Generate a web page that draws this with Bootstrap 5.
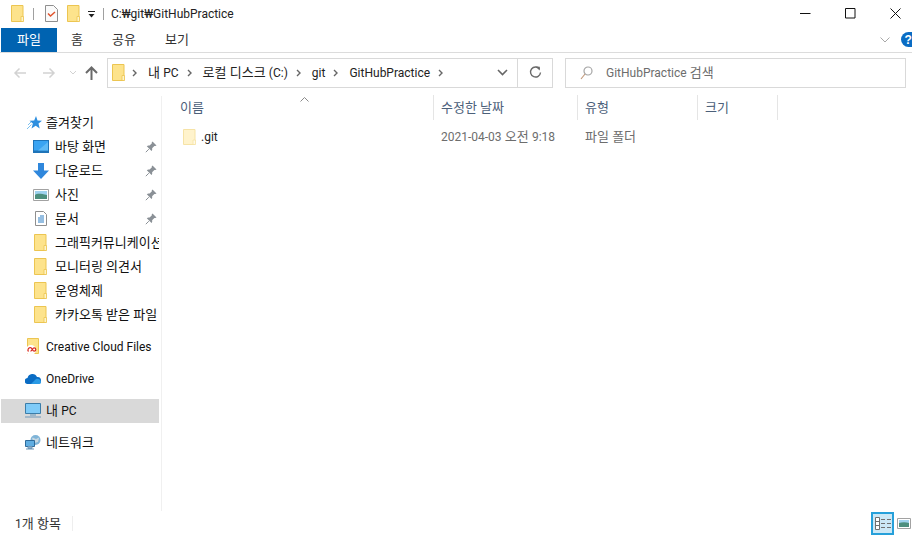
<!DOCTYPE html>
<html lang="ko">
<head>
<meta charset="utf-8">
<title>GitHubPractice</title>
<link href="https://cdn.jsdelivr.net/npm/bootstrap@5.3.0/dist/css/bootstrap.min.css" rel="stylesheet">
<style>
html,body{height:100%;}
body{width:912px;height:536px;overflow:hidden;background:#fff;font:13px/16px Roboto,"Noto Sans CJK KR",sans-serif;color:#1a1a1a;}
.lat{font-size:12px;}
svg{display:block;flex:none;}
.win{height:536px;}
.titlebar{height:28px;padding-left:11px;}
.tsep{width:1px;height:12px;background:#a0a0a0;}
.gap-a{margin-left:9px;}
.gap-b{margin-left:11px;}
.gap-c{margin-left:9px;}
.gap-d{margin-left:8px;}
.gap-e{margin-left:7px;}
.wintitle{margin-left:7px;color:#222;}
.winbtns{margin-left:auto;padding-right:11px;gap:34px;}
.ribbon{height:25px;padding-left:1px;border-bottom:1px solid #dcdcdc;}
.rtab{height:24px;color:#333;}
.rtab-file{width:56px;background:#0063b1;color:#fff;}
.rtab-home{width:40px;}
.rtab-share{width:54px;}
.rtab-view{width:52px;}
.ribbon-end{margin-left:auto;gap:11px;}
.addrrow{height:43px;padding:5px 6px 8px 13px;}
.navicons{width:94px;}
.nav-fwd{margin-left:17px;}
.nav-drop{margin-left:13px;}
.nav-up{margin-left:8px;}
.addr{width:446px;height:30px;border:1px solid #d9d9d9;padding-left:4px;color:#222;}
.crumb{margin:0 7px 0 9px;}
.crumb-sep{margin-left:6px;}
.addr-end{margin-left:auto;}
.addr-drop{width:30px;}
.addr-ref{width:35px;height:28px;border-left:1px solid #d9d9d9;}
.search{margin-left:12px;width:341px;height:30px;border:1px solid #d9d9d9;padding-left:40px;color:#6d6d6d;position:relative;}
.searchicon{position:absolute;left:14px;top:7px;}
.content{height:417px;}
.side{width:162px;border-right:1px solid #f0f0f0;padding:15px 2px 0 1px;}
.srow{height:24px;white-space:nowrap;overflow:hidden;color:#111;}
.srow>*{flex:none;}
.srow-fav{padding-left:26px;gap:4px;}
.srow-item{padding-left:31px;gap:6px;}
.srow-top{padding-left:23px;gap:5px;}
.srow-active{background:#d9d9d9;}
.icn{width:17px;display:flex;justify-content:center;}
.pin{margin-left:auto;margin-right:2px;}
.mt-cc{margin-top:8px;}
.mt-od{margin-top:8px;}
.mt-pc{margin-top:8px;}
.mt-net{margin-top:8px;}
.main{flex:1;position:relative;}
.hdr{height:26px;color:#4c607a;margin-top:-1px;}
.hcol{height:25px;display:flex;align-items:center;padding-left:7px;border-right:1px solid #e5e5e5;}
.w-name{width:272px;padding-left:18px;}
.w-date{width:144px;}
.w-type{width:120px;}
.w-size{width:80px;}
.sortcaret{position:absolute;left:138px;top:1px;}
.frow{height:24px;margin-top:4px;color:#6d6d6d;}
.fcell{padding-left:7px;}
.fname{width:272px;padding-left:21px;gap:5px;color:#222;}
.fdate{width:144px;}
.ftype{width:120px;}
.statusbar{height:25px;padding-left:15px;color:#333;}
.stsep{width:1px;height:15px;background:#eee;margin-left:11px;}
.viewbtns{margin-left:auto;padding-right:1px;gap:3px;}
.viewon{width:23px;height:23px;background:#cce8f6;border:2px solid #26a0da;}
</style>
</head>
<body>
<svg width="0" height="0" style="position:absolute">
<defs>
<symbol id="folder" viewBox="0 0 13 17">
<path d="M.5.500h11.500v16H.5z" fill="#fde38c" stroke="#ecc551"/>
<path d="M10 11.500h2.500v5H10z" fill="#fff4c8" stroke="#ecc551" stroke-width=".8"/>
</symbol>
<symbol id="pinx" viewBox="0 0 12 12">
<path d="M7.500.500l4 4-1.200.6-.9-.2-2.300 2.300c.3 1.100.1 2-.6 2.700L1.800 5.200c.7-.7 1.700-.9 2.800-.6l2.300-2.300-.2-.9z" fill="#8a9096"/>
<path d="M3.800 8.200L.8 11.200" stroke="#8a9096"/>
</symbol>
</defs>
</svg>
<div class="win d-flex flex-column">

<div class="titlebar d-flex align-items-center">
  <svg width="13" height="17"><use href="#folder"/></svg>
  <span class="tsep gap-a"></span>
  <svg class="gap-b" width="13" height="17" viewBox="0 0 13 17"><path d="M.5.500h8l4 4v12H.5z" fill="#fafafa" stroke="#8f8f8f"/><path d="M3 8.500l2.500 2.500L10 7" fill="none" stroke="#e0532c" stroke-width="1.500"/></svg>
  <svg class="gap-c" width="13" height="17"><use href="#folder"/></svg>
  <svg class="gap-d" width="8" height="8" viewBox="0 0 8 8"><path d="M0 1h7v1H0z" fill="#222"/><path d="M.5 4h6L3.500 7.500z" fill="#222"/></svg>
  <span class="tsep gap-e"></span>
  <span class="wintitle lat">C:₩git₩GitHubPractice</span>
  <div class="winbtns d-flex">
    <svg width="11" height="11" viewBox="0 0 11 11"><path d="M0 5.500h10.500" stroke="#111"/></svg>
    <svg width="11" height="11" viewBox="0 0 11 11"><path d="M.5.500h9.500v9.500H.5z" fill="none" stroke="#111"/></svg>
    <svg width="11" height="11" viewBox="0 0 11 11"><path d="M.5.500l10 10M10.500.500l-10 10" stroke="#111"/></svg>
  </div>
</div>

<div class="ribbon d-flex align-items-center">
  <div class="rtab rtab-file d-flex align-items-center justify-content-center">파일</div>
  <div class="rtab rtab-home d-flex align-items-center justify-content-center">홈</div>
  <div class="rtab rtab-share d-flex align-items-center justify-content-center">공유</div>
  <div class="rtab rtab-view d-flex align-items-center justify-content-center">보기</div>
  <div class="ribbon-end d-flex align-items-center">
    <svg width="10" height="6" viewBox="0 0 10 6"><path d="M.5.500L5 5l4.500-4.500" fill="none" stroke="#a8a8a8"/></svg>
    <svg width="11" height="15" viewBox="0 0 11 15"><path d="M7.500 0a7.500 7.500 0 1 0 0 15H11V0z" fill="#0a6cc4"/><text x="3.500" y="12" fill="#fff" font-size="12" font-weight="700" font-family="Liberation Sans, sans-serif">?</text></svg>
  </div>
</div>

<div class="addrrow d-flex align-items-center">
  <div class="navicons d-flex align-items-center">
    <svg width="13" height="12" viewBox="0 0 13 12"><path d="M13 6H2M6.500 1.500L2 6l4.500 4.500" fill="none" stroke="#d2d2d2" stroke-width="1.500"/></svg>
    <svg class="nav-fwd" width="13" height="12" viewBox="0 0 13 12"><path d="M0 6h11M6.500 1.500L11 6l-4.500 4.500" fill="none" stroke="#d2d2d2" stroke-width="1.500"/></svg>
    <svg class="nav-drop" width="8" height="6" viewBox="0 0 8 6"><path d="M1 1l3 3 3-3" fill="none" stroke="#d2d2d2"/></svg>
    <svg class="nav-up" width="13" height="14" viewBox="0 0 13 14"><path d="M6.500 14V2M1 7l5.500-5.500L12 7" fill="none" stroke="#6a6a6a" stroke-width="2"/></svg>
  </div>
  <div class="addr d-flex align-items-center">
    <svg width="13" height="17"><use href="#folder"/></svg>
    <svg class="crumb-sep" width="8" height="8" viewBox="0 0 8 8"><path d="M2 1l3 3-3 3" fill="none" stroke="#666" stroke-width="1.400"/></svg>
    <span class="crumb">내 <span class="lat">PC</span></span>
    <svg width="8" height="8" viewBox="0 0 8 8"><path d="M2 1l3 3-3 3" fill="none" stroke="#666" stroke-width="1.400"/></svg>
    <span class="crumb">로컬 디스크 <span class="lat">(C:)</span></span>
    <svg width="8" height="8" viewBox="0 0 8 8"><path d="M2 1l3 3-3 3" fill="none" stroke="#666" stroke-width="1.400"/></svg>
    <span class="crumb lat">git</span>
    <svg width="8" height="8" viewBox="0 0 8 8"><path d="M2 1l3 3-3 3" fill="none" stroke="#666" stroke-width="1.400"/></svg>
    <span class="crumb lat">GitHubPractice</span>
    <svg width="8" height="8" viewBox="0 0 8 8"><path d="M2 1l3 3-3 3" fill="none" stroke="#666" stroke-width="1.400"/></svg>
    <div class="addr-end d-flex align-items-center">
      <div class="addr-drop d-flex justify-content-center"><svg width="11" height="7" viewBox="0 0 11 7"><path d="M1 1l4.500 4.500L10 1" fill="none" stroke="#666" stroke-width="1.600"/></svg></div>
      <div class="addr-ref d-flex align-items-center justify-content-center"><svg width="13" height="13" viewBox="0 0 13 13"><path d="M10.500 3A5 5 0 1 0 11.500 6.500" fill="none" stroke="#6a6a6a" stroke-width="1.400"/><path d="M6.500.500L10.800.800V4.500z" fill="#6a6a6a"/></svg></div>
    </div>
  </div>
  <div class="search d-flex align-items-center">
    <svg class="searchicon" width="13" height="14" viewBox="0 0 13 14"><circle cx="8" cy="5" r="4" fill="none" stroke="#a5a5a5" stroke-width="1.200"/><path d="M5 8l-4 5" stroke="#c29a7c" stroke-width="1.200"/></svg>
    <span><span class="lat">GitHubPractice</span> 검색</span>
  </div>
</div>

<div class="content d-flex">
  <nav class="side">
    <div class="srow srow-fav d-flex align-items-center">
      <svg width="15" height="14" viewBox="0 0 15 14"><path d="M9 0l1.500 4.500 4.500.2-3.500 2.900 1.200 4.900-4-2.700-4.200 2.700 1.400-4.900L2.500 4.800 7.200 4.500z" fill="#2e8fdf"/><path d="M0 13l4.500-4.500M1 9l3-3" stroke="#7cc0ef"/></svg>
      <span>즐겨찾기</span>
    </div>
    <div class="srow srow-item d-flex align-items-center">
      <span class="icn"><svg width="16" height="13" viewBox="0 0 16 13"><path d="M0 0h16v13H0z" fill="#1f74b8"/><path d="M1 1h14v9.500H1z" fill="#3aa4f2"/><path d="M5 10.500L15 2v8.500z" fill="#5fbaf6"/></svg></span>
      <span>바탕 화면</span>
      <svg class="pin" width="12" height="12"><use href="#pinx"/></svg>
    </div>
    <div class="srow srow-item d-flex align-items-center">
      <span class="icn"><svg width="16" height="16" viewBox="0 0 16 16"><path d="M5 0h6v7.500h5L8 16 0 7.500h5z" fill="#2f87dc"/></svg></span>
      <span>다운로드</span>
      <svg class="pin" width="12" height="12"><use href="#pinx"/></svg>
    </div>
    <div class="srow srow-item d-flex align-items-center">
      <span class="icn"><svg width="16" height="12" viewBox="0 0 16 12"><path d="M.5.500h15v11H.5z" fill="#fff" stroke="#a2a2a2"/><path d="M2 2h12v4H2z" fill="#9fd2ee"/><path d="M2 6c3-2 6-1 12 0v4H2z" fill="#4d8f7e"/></svg></span>
      <span>사진</span>
      <svg class="pin" width="12" height="12"><use href="#pinx"/></svg>
    </div>
    <div class="srow srow-item d-flex align-items-center">
      <span class="icn"><svg width="12" height="15" viewBox="0 0 12 15"><path d="M.5.500h8l3 3v11H.5z" fill="#fff" stroke="#8f8f8f"/><path d="M5 5h4M3 7h6M3 9h6M3 11h6" stroke="#2d7fc5"/></svg></span>
      <span>문서</span>
      <svg class="pin" width="12" height="12"><use href="#pinx"/></svg>
    </div>
    <div class="srow srow-item d-flex align-items-center">
      <span class="icn"><svg width="13" height="17"><use href="#folder"/></svg></span>
      <span>그래픽커뮤니케이션</span>
    </div>
    <div class="srow srow-item d-flex align-items-center">
      <span class="icn"><svg width="13" height="17"><use href="#folder"/></svg></span>
      <span>모니터링 의견서</span>
    </div>
    <div class="srow srow-item d-flex align-items-center">
      <span class="icn"><svg width="13" height="17"><use href="#folder"/></svg></span>
      <span>운영체제</span>
    </div>
    <div class="srow srow-item d-flex align-items-center">
      <span class="icn"><svg width="13" height="17"><use href="#folder"/></svg></span>
      <span>카카오톡 받은 파일</span>
    </div>
    <div class="srow srow-top mt-cc d-flex align-items-center">
      <span class="icn"><svg width="15" height="17" viewBox="0 0 15 17"><path d="M2.500.500h11v15h-11z" fill="#fde38c" stroke="#ecc551"/><circle cx="6" cy="12" r="5" fill="#fff"/><path d="M3.500 13.500a2.300 2.300 0 0 1 2-3.800c1.600 0 2 3.500 3.600 3.500a1.700 1.700 0 0 0 0-3.400c-1.600 0-2 3.400-3.600 3.400" fill="none" stroke="#d8261c" stroke-width="1.200"/></svg></span>
      <span class="lat">Creative Cloud Files</span>
    </div>
    <div class="srow srow-top mt-od d-flex align-items-center">
      <span class="icn"><svg width="16" height="11" viewBox="0 0 16 11"><path d="M3 11a3 3 0 0 1-.5-6A5 5 0 0 1 12 4a3.500 3.500 0 0 1 1 7z" fill="#0a6cc4"/><path d="M6 11l5-5c2-1 5 .5 5 3 0 1-.5 2-2 2z" fill="#2a9ae5"/></svg></span>
      <span class="lat">OneDrive</span>
    </div>
    <div class="srow srow-top srow-active mt-pc d-flex align-items-center">
      <span class="icn"><svg width="16" height="15" viewBox="0 0 16 15"><path d="M.5.500h15v10H.5z" fill="#7fcbf8" stroke="#3c7da8"/><path d="M5 11h6v2H5z" fill="#9db8ca"/><path d="M0 14h16" stroke="#6f97b8"/></svg></span>
      <span>내 <span class="lat">PC</span></span>
    </div>
    <div class="srow srow-top mt-net d-flex align-items-center">
      <span class="icn"><svg width="16" height="15" viewBox="0 0 16 15"><circle cx="10.500" cy="5" r="5" fill="#7fb4d8"/><path d="M7 3c2-1 3 1 4 1s2-2 3-1l-1 4-4 1z" fill="#c7d8e2"/><path d="M.5 5.500h9v6h-9z" fill="#60aee2" stroke="#2f6b9a"/><path d="M3 11.500h4v2H3zM1 14h8" fill="#8bb0c9" stroke="#6f97b8"/></svg></span>
      <span>네트워크</span>
    </div>
  </nav>

  <div class="main">
    <div class="hdr d-flex align-items-center">
      <div class="hcol w-name">이름</div>
      <div class="hcol w-date">수정한 날짜</div>
      <div class="hcol w-type">유형</div>
      <div class="hcol w-size">크기</div>
    </div>
    <svg class="sortcaret" width="9" height="5" viewBox="0 0 9 5"><path d="M.5 4.500l4-4 4 4" fill="none" stroke="#8a8a8a"/></svg>
    <div class="frow d-flex align-items-center">
      <div class="fname d-flex align-items-center">
        <svg width="13" height="16" viewBox="0 0 13 16"><path d="M.5.500h11.500v15H.5z" fill="#fff3cc" stroke="#f6e3a6"/><path d="M10 11h2.500v4.500H10z" fill="#fff9e6" stroke="#f6e3a6" stroke-width=".8"/></svg>
        <span class="lat">.git</span>
      </div>
      <div class="fcell fdate"><span class="lat">2021-04-03</span> 오전 <span class="lat">9:18</span></div>
      <div class="fcell ftype">파일 폴더</div>
    </div>
  </div>
</div>

<div class="statusbar d-flex align-items-center">
  <span><span class="lat">1</span>개 항목</span>
  <span class="stsep"></span>
  <div class="viewbtns d-flex align-items-center">
    <div class="viewon d-flex align-items-center justify-content-center">
      <svg width="16" height="13" viewBox="0 0 16 13"><path d="M.5.500h4v12h-4zM.5 4.500h4M.5 8.500h4" fill="#fff" stroke="#6f6f6f"/><path d="M6 2.500h4M12 2.500h4M6 6.500h4M12 6.500h4M6 10.500h4M12 10.500h4" stroke="#707070"/></svg>
    </div>
    <svg width="14" height="11" viewBox="0 0 14 11"><path d="M.5.500h13v10H.5z" fill="#fff" stroke="#a2a2a2"/><path d="M2 2h10v3H2z" fill="#9fd2ee"/><path d="M2 5c3-1 7-1 10 0v4H2z" fill="#4d8f7e"/></svg>
  </div>
</div>
</div>
</body>
</html>
